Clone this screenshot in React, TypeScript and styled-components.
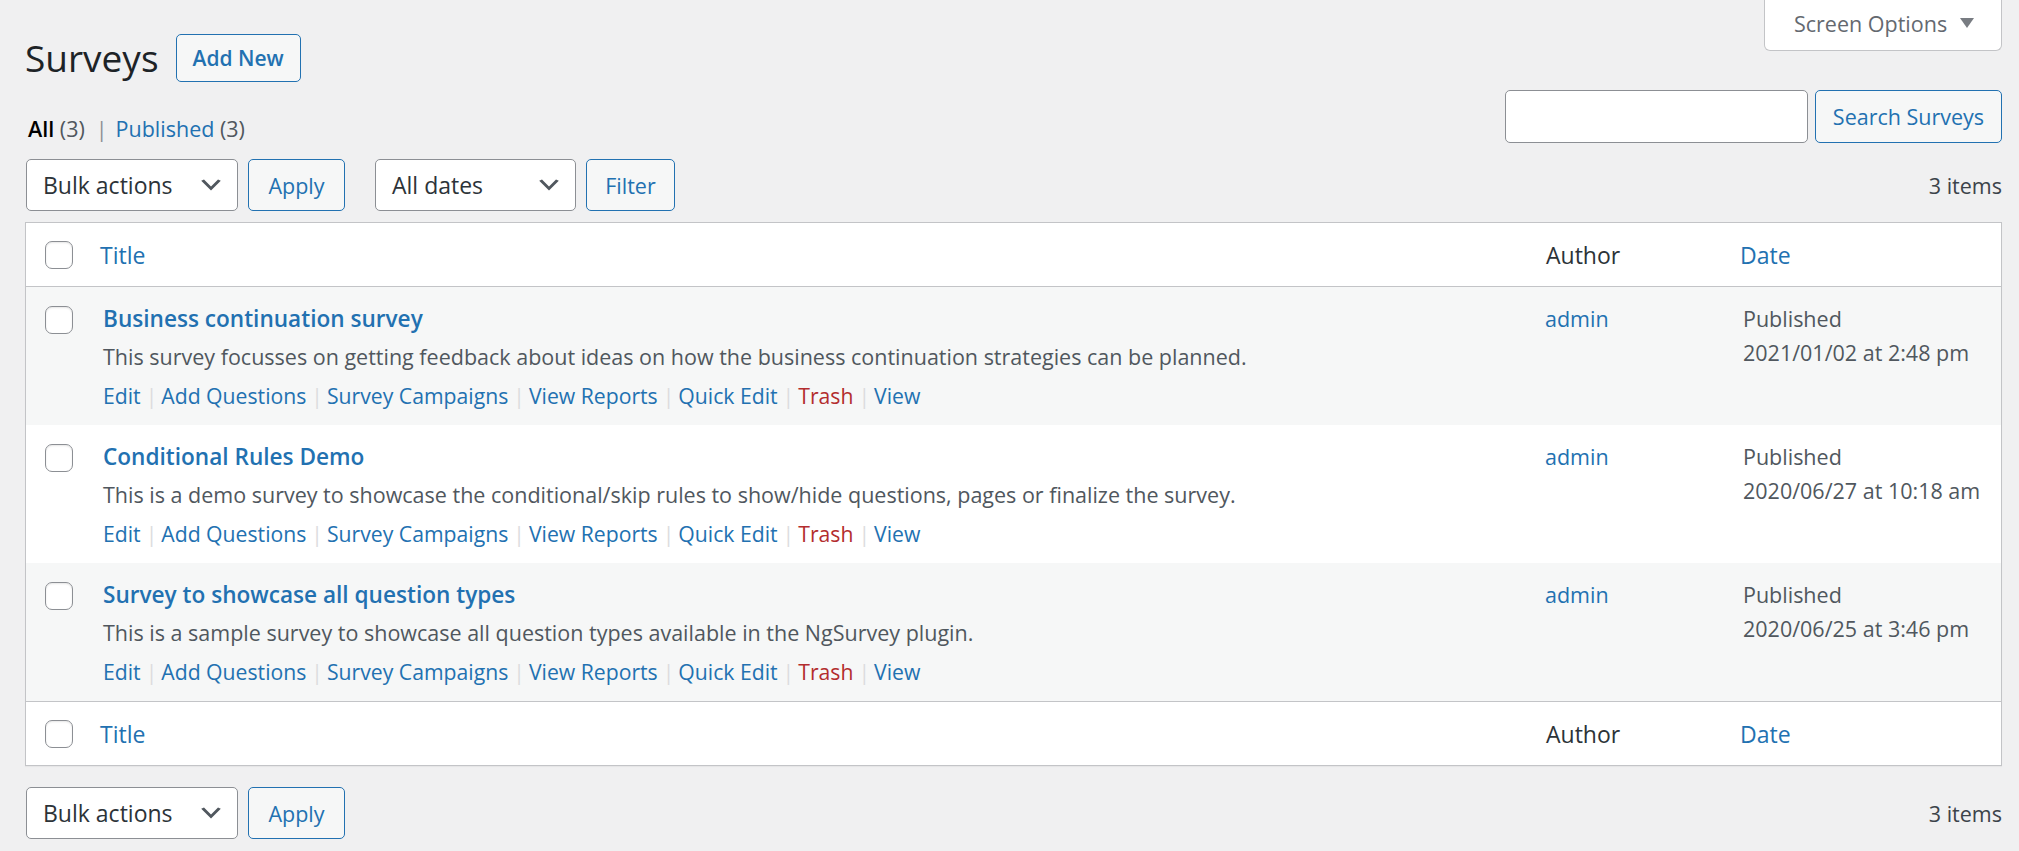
import React from "react";
import styled, { createGlobalStyle } from "styled-components";

const surveys = [
  {
    title: "Business continuation survey",
    description:
      "This survey focusses on getting feedback about ideas on how the business continuation strategies can be planned.",
    date: "2021/01/02 at 2:48 pm",
  },
  {
    title: "Conditional Rules Demo",
    description:
      "This is a demo survey to showcase the conditional/skip rules to show/hide questions, pages or finalize the survey.",
    date: "2020/06/27 at 10:18 am",
  },
  {
    title: "Survey to showcase all question types",
    description:
      "This is a sample survey to showcase all question types available in the NgSurvey plugin.",
    date: "2020/06/25 at 3:46 pm",
  },
];

const rowActions = [
  "Edit",
  "Add Questions",
  "Survey Campaigns",
  "View Reports",
  "Quick Edit",
  "Trash",
  "View",
];

const Chevron = () => (
  <svg width="28" height="28" viewBox="0 0 20 20" aria-hidden="true">
    <path d="M5 6l5 5 5-5 2 1-7 7-7-7 2-1z" fill="#50575e" />
  </svg>
);

const SelectBox: React.FC<{ label: string; width: number }> = ({ label, width }) => (
  <StyledSelect $width={width}>
    <span>{label}</span>
    <Chevron />
  </StyledSelect>
);

const HeaderRow: React.FC<{ $footer?: boolean }> = ({ $footer }) => (
  <StyledHeadRow $footer={$footer}>
    <StyledCheckCell>
      <StyledCheckbox />
    </StyledCheckCell>
    <StyledHeadCell $pad={14} $link>
      Title
    </StyledHeadCell>
    <StyledHeadCell $pad={18}>Author</StyledHeadCell>
    <StyledHeadCell $pad={14} $link>
      Date
    </StyledHeadCell>
  </StyledHeadRow>
);

const App: React.FC = () => {
  return (
    <>
      <GlobalStyle />
      <StyledWrap>
        <StyledTop>
          <div>
            <StyledHeading>
              <StyledTitle>Surveys</StyledTitle>
              <StyledAddNew>Add New</StyledAddNew>
            </StyledHeading>
            <StyledViews>
              <strong>All</strong> <StyledCount>(3)</StyledCount>
              <StyledViewSep>|</StyledViewSep>
              <StyledLink>
                Published <StyledCount>(3)</StyledCount>
              </StyledLink>
            </StyledViews>
          </div>
          <StyledRightCol>
            <StyledScreenOptions>
              Screen Options
              <svg width="14" height="10" viewBox="0 0 14 10" aria-hidden="true">
                <path d="M0 0h14L7 10z" fill="#787c82" />
              </svg>
            </StyledScreenOptions>
            <StyledSearch>
              <StyledSearchInput />
              <StyledButton $width={187} $height={53}>
                Search Surveys
              </StyledButton>
            </StyledSearch>
          </StyledRightCol>
        </StyledTop>

        <StyledTablenav>
          <StyledActions>
            <SelectBox label="Bulk actions" width={212} />
            <StyledButton $width={97}>Apply</StyledButton>
          </StyledActions>
          <StyledActions>
            <SelectBox label="All dates" width={201} />
            <StyledButton $width={89}>Filter</StyledButton>
          </StyledActions>
          <StyledItems>3 items</StyledItems>
        </StyledTablenav>

        <StyledTable>
          <HeaderRow />
          {surveys.map((survey, i) => (
            <StyledRow key={survey.title} $striped={i % 2 === 0}>
              <StyledCheckCell $body>
                <StyledCheckbox />
              </StyledCheckCell>
              <StyledTitleCell>
                <StyledRowTitle>{survey.title}</StyledRowTitle>
                <StyledDescription>{survey.description}</StyledDescription>
                <StyledRowActions>
                  {rowActions.map((action, j) => (
                    <React.Fragment key={action}>
                      {j > 0 && <StyledActionSep>|</StyledActionSep>}
                      <StyledAction $danger={action === "Trash"}>{action}</StyledAction>
                    </React.Fragment>
                  ))}
                </StyledRowActions>
              </StyledTitleCell>
              <StyledMetaCell>
                <StyledLink>admin</StyledLink>
              </StyledMetaCell>
              <StyledMetaCell>
                Published
                <br />
                {survey.date}
              </StyledMetaCell>
            </StyledRow>
          ))}
          <HeaderRow $footer />
        </StyledTable>

        <StyledTablenav $bottom>
          <StyledActions>
            <SelectBox label="Bulk actions" width={212} />
            <StyledButton $width={97}>Apply</StyledButton>
          </StyledActions>
          <StyledItems>3 items</StyledItems>
        </StyledTablenav>
      </StyledWrap>
    </>
  );
};

export default App;

const GlobalStyle = createGlobalStyle`
  * { box-sizing: border-box; }
  html, body {
    margin: 0;
    padding: 0;
    background: #f0f0f1;
  }
  body {
    font-family: "Open Sans", "Noto Sans", sans-serif;
    font-size: 21.5px;
    color: #3c434a;
  }
`;

const StyledWrap = styled.div`
  padding: 0 17px 0 25px;
`;

const StyledTop = styled.div`
  display: grid;
  grid-template-columns: 1fr auto;
`;

const StyledHeading = styled.div`
  display: flex;
  align-items: center;
  gap: 17px;
  height: 48px;
  margin-top: 34px;
`;

const StyledTitle = styled.h1`
  margin: 0;
  font-size: 37px;
  font-weight: 400;
  line-height: 48px;
  color: #1d2327;
`;

const StyledAddNew = styled.button`
  height: 48px;
  padding: 0 16px;
  border: 1px solid #2271b1;
  border-radius: 5px;
  background: #f6f7f7;
  color: #2271b1;
  font-family: inherit;
  font-size: 21px;
  font-weight: 600;
`;

const StyledViews = styled.div`
  margin-top: 31px;
  padding-left: 3px;
  line-height: 32px;
  color: #646970;

  strong {
    color: #000;
    font-weight: 600;
  }
`;

const StyledCount = styled.span`
  color: #50575e;
`;

const StyledViewSep = styled.span`
  padding: 0 8px 0 11px;
  color: #8c8f94;
`;

const StyledLink = styled.span`
  color: #2271b1;
`;

const StyledRightCol = styled.div`
  display: flex;
  flex-direction: column;
  align-items: flex-end;
`;

const StyledScreenOptions = styled.div`
  display: flex;
  align-items: center;
  gap: 13px;
  width: 238px;
  height: 51px;
  padding: 0 0 4px 29px;
  background: #fff;
  border: 1px solid #c3c4c7;
  border-top: none;
  border-radius: 0 0 6px 6px;
  color: #646970;
`;

const StyledSearch = styled.div`
  display: flex;
  gap: 7px;
  margin-top: 39px;
`;

const StyledSearchInput = styled.div`
  width: 303px;
  height: 53px;
  background: #fff;
  border: 1px solid #8c8f94;
  border-radius: 5px;
`;

const StyledButton = styled.button<{ $width: number; $height?: number }>`
  width: ${(p) => p.$width}px;
  height: ${(p) => p.$height ?? 52}px;
  padding: 0;
  border: 1px solid #2271b1;
  border-radius: 5px;
  background: #f6f7f7;
  color: #2271b1;
  font-family: inherit;
  font-size: 21.5px;
`;

const StyledTablenav = styled.div<{ $bottom?: boolean }>`
  display: flex;
  align-items: center;
  gap: 30px;
  height: 52px;
  margin-top: ${(p) => (p.$bottom ? 21 : 14)}px;
  padding-left: 1px;
`;

const StyledActions = styled.div`
  display: flex;
  gap: 10px;
`;

const StyledSelect = styled.div<{ $width: number }>`
  display: flex;
  align-items: center;
  justify-content: space-between;
  width: ${(p) => p.$width}px;
  height: 52px;
  padding: 0 12px 0 16px;
  background: #fff;
  border: 1px solid #8c8f94;
  border-radius: 5px;
  color: #2c3338;
  font-size: 23px;
`;

const StyledItems = styled.div`
  margin-left: auto;
  color: #3c434a;
`;

const StyledTable = styled.div`
  margin-top: 11px;
  background: #fff;
  border: 1px solid #c3c4c7;
  box-shadow: 0 1px 1px rgba(0, 0, 0, 0.04);
`;

const columns = "60px 1fr 198px 275px";

const StyledHeadRow = styled.div<{ $footer?: boolean }>`
  display: grid;
  grid-template-columns: ${columns};
  align-items: center;
  height: 64px;
  ${(p) =>
    p.$footer ? "border-top: 1px solid #c3c4c7;" : "border-bottom: 1px solid #c3c4c7;"}
`;

const StyledHeadCell = styled.div<{ $pad: number; $link?: boolean }>`
  padding-left: ${(p) => p.$pad}px;
  font-size: 23px;
  line-height: 32px;
  color: ${(p) => (p.$link ? "#2271b1" : "#2c3338")};
`;

const StyledCheckCell = styled.div<{ $body?: boolean }>`
  display: flex;
  padding-left: 19px;
  padding-top: ${(p) => (p.$body ? 19 : 0)}px;
`;

const StyledCheckbox = styled.span`
  display: block;
  width: 28px;
  height: 28px;
  background: #fff;
  border: 1px solid #8c8f94;
  border-radius: 7px;
  box-shadow: inset 0 1px 2px rgba(0, 0, 0, 0.1);
`;

const StyledRow = styled.div<{ $striped: boolean }>`
  display: grid;
  grid-template-columns: ${columns};
  align-items: start;
  height: 138px;
  background: ${(p) => (p.$striped ? "#f6f7f7" : "#fff")};
`;

const StyledTitleCell = styled.div`
  padding: 13px 17px 0;
`;

const StyledRowTitle = styled.div`
  font-size: 22.6px;
  font-weight: 600;
  line-height: 38px;
  color: #2271b1;
`;

const StyledDescription = styled.div`
  margin-top: 0;
  line-height: 38px;
  color: #50575e;
  white-space: nowrap;
`;

const StyledRowActions = styled.div`
  display: flex;
  margin-top: 1px;
  font-size: 21.2px;
  line-height: 38px;
`;

const StyledActionSep = styled.span`
  padding: 0 4px 0 5px;
  color: #dcdcde;
`;

const StyledAction = styled.span<{ $danger?: boolean }>`
  color: ${(p) => (p.$danger ? "#b32d2e" : "#2271b1")};
`;

const StyledMetaCell = styled.div`
  padding: 15px 17px 0;
  line-height: 34px;
  color: #50575e;
`;
